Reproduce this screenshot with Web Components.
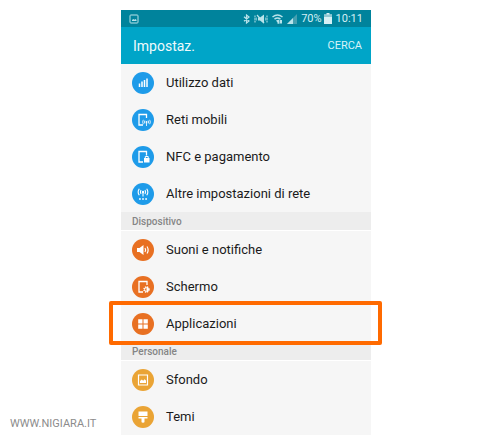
<!DOCTYPE html>
<html lang="it">
<head>
<meta charset="utf-8">
<meta name="viewport" content="width=device-width, initial-scale=1">
<title>Impostazioni</title>
<style>
    body { margin: 0; background: #fff; font-family: Roboto, "Liberation Sans", sans-serif; }
</style>
</head>
<body>
<settings-page></settings-page>

<script>
    // white line icons, drawn on a 22x22 disc
    const ICONS = {
        data: '<path d="M7.500 15v-3.500M10 15V9.500M12.500 15V8M15 15V6.500" stroke-width="1.500"/>',
        mobile: '<path d="M14.500 9V5.500H7v10.500h4" stroke-width="1.300"/><circle cx="14.500" cy="13" r="1" fill="#fff" stroke="none"/><path d="M14.500 13.500V17M12.800 11.500q-1 1.500 0 3M16.200 11.500q1 1.500 0 3M11.300 10.800q-1.300 2.200 0 4.400M17.700 10.800q1.300 2.200 0 4.400" stroke-width=".8"/>',
        nfc: '<path d="M14.500 9.500v-4H7v10.500h4" stroke-width="1.300"/><path d="M12 12h5.500v4.500H12z" fill="#fff" stroke="none"/><path d="M13.300 12v-1.500h2.900V12" stroke-width="1"/>',
        network: '<circle cx="11" cy="9" r="1.200" fill="#fff" stroke="none"/><path d="M11 9.500v4M9 7q-1.200 2 0 4M13 7q1.200 2 0 4M7.300 5.700q-2.300 3.300 0 6.600M14.700 5.700q2.300 3.300 0 6.600" stroke-width="1.100"/><path d="M7 16h1.800M10.100 16h1.800M13.200 16h1.800" stroke-width="1.600"/>',
        sound: '<path d="M5 9h2.500L11.500 6v10L7.500 13H5z" fill="#fff" stroke="none"/><path d="M13 9q1.300 2 0 4M15 7.500q2.300 3.500 0 7" stroke-width="1.200"/>',
        screen: '<path d="M15 9V5.500H7v10.500h4" stroke-width="1.300"/><circle cx="14.500" cy="13.500" r="2.500" stroke-dasharray="1.300 .7" stroke-width="1.400"/><circle cx="14.500" cy="13.500" r="1.900" stroke-width=".8"/><path d="M14.500 11.500v4a2 2 0 0 0 0-4" fill="#fff" stroke="none"/>',
        apps: '<path d="M6.200 6.200h4.300v4.300H6.200zM11.500 6.200h4.300v4.300h-4.300zM6.200 11.500h4.300v4.300H6.200zM11.500 11.500h4.300v4.300h-4.300z" fill="#fff" stroke="none"/>',
        wallpaper: '<path d="M6.500 6h9v10h-9z" stroke-width="1.200"/><path d="M8 14v-2l1.800-1.500 1.400 1.200 1.300-1.500L14 11.500V14z" fill="#fff" stroke="none"/>',
        themes: '<path d="M6.500 5.500h9V10h-9zM6.500 11h9v1.500h-3V16q0 .8-1.500.8T9.500 16v-3.500h-3z" fill="#fff" stroke="none"/>'
    };

    function attach(host, html){
        const template = document.createElement('template');
        template.innerHTML = html;
        host.attachShadow({mode: 'open'}).appendChild(template.content.cloneNode(true));
    }

    class StatusBar extends HTMLElement{
        constructor(){
            super();
            attach(this, `
            <style>
                :host { display: flex; align-items: center; height: 17px; padding: 0 8px; background: #00839c; color: #d5f0f5; font-size: 11px; line-height: 17px; }
                svg { display: block; flex: none; fill: none; stroke: #b9e3ea; }
                .right { display: flex; align-items: center; gap: 4px; margin-left: auto; }
                .battery { display: flex; align-items: center; gap: 2px; }
            </style>
            <svg width="10" height="10" viewBox="0 0 10 10"><rect x="1" y="1" width="8" height="8" rx=".8"/><path d="M3 7V6l1.300-1 1 .8L6.500 5l1 1v1z" fill="#b9e3ea" stroke="none"/></svg>
            <div class="right">
                <svg width="7" height="10" viewBox="0 0 7 10"><path d="M1 2.800l5 4.200-2.500 2V1L6 3 1 7.200" stroke-width="1.200"/></svg>
                <svg width="14" height="10" viewBox="0 0 14 10"><path d="M4 3.500h2L10 .5v9L6 6.500H4z" fill="#b9e3ea" stroke="none"/><path d="M3 1l7 8" stroke-width="1.200"/><path d="M1 1.500v7M13 1.500v7" stroke-dasharray="2 .5"/><path d="M2.500 3.500v3M11.500 3.500v3" stroke-width=".6"/></svg>
                <svg width="11" height="10" viewBox="0 0 11 10"><path d="M.5 3q5-3.900 10 0M2.500 5.200q3-2.400 6 0" stroke-width="1.500"/><path d="M4 6.500q1.500-1 3 0L5.500 8.500zM5.500 9.800V6.500l1-1 1 1v3.300M8 6v3l1 1 1-1V6" fill="#b9e3ea" stroke="none"/></svg>
                <svg width="10" height="10" viewBox="0 0 10 10"><path d="M0 10L10 0v10z" fill="#459fb0" stroke="none"/><path d="M0 10l6-6v6z" fill="#b9e3ea" stroke="none"/></svg>
                <div class="battery">
                    <span>70%</span>
                    <svg width="8" height="11" viewBox="0 0 8 11"><path d="M2.500 0h3v1.500H8V11H0V1.500h2.500z" fill="#d5f0f5" stroke="none"/><path d="M0 1.500h8V4H0z" fill="#8fc7d2" stroke="none"/></svg>
                </div>
                <span>10:11</span>
            </div>`);
        }
    }
    window.customElements.define('status-bar', StatusBar);

    class ActionBar extends HTMLElement{
        constructor(){
            super();
            attach(this, `
            <style>
                :host { display: flex; align-items: center; justify-content: space-between; height: 37px; padding: 0 9px 0 12px; background: #00a5c8; color: #effafc; }
                h1 { margin: 0; font-size: 14px; line-height: 18px; font-weight: 400; }
                button { margin: 0; padding: 0; border: 0; background: none; color: #d8f3f8; font: inherit; font-size: 11px; line-height: 18px; cursor: pointer; }
            </style>
            <h1><slot></slot></h1>
            <button type="button">CERCA</button>`);
        }
    }
    window.customElements.define('action-bar', ActionBar);

    class SettingsGroup extends HTMLElement{
        constructor(){
            super();
            attach(this, `
            <style>
                :host { display: block; }
                h2 { margin: 0; padding: 1px 11px 0; border-bottom: 1px solid #fff; background: #ededed; color: #858585; font-size: 10px; line-height: 17px; font-weight: 500; }
            </style>
            <h2></h2>
            <slot></slot>`);
            const title = this.shadowRoot.querySelector('h2');
            title.textContent = this.getAttribute('label') || '';
            title.hidden = !this.hasAttribute('label');
        }
    }

    class SettingsItem extends HTMLElement{
        constructor(){
            super();
            attach(this, `
            <style>
                :host { display: block; position: relative; }
                a { display: flex; align-items: center; gap: 12px; height: 37px; padding: 0 11px; color: #1b1b1b; font-size: 13px; line-height: 18px; text-decoration: none; }
                svg { flex: none; width: 22px; height: 22px; border-radius: 50%; background: var(--icon-color, #1e9be9); fill: none; stroke: #fff; stroke-width: 1.200; }
                /* frame around the item, wider than the phone */
                :host([highlight])::after { content: ""; position: absolute; z-index: 1; top: -4px; right: -11px; bottom: -3px; left: -12px; box-sizing: border-box; border: 4px solid #ff6a00; border-radius: 2px; pointer-events: none; }
            </style>
            <a href="#"><svg viewBox="0 0 22 22" aria-hidden="true"></svg><span><slot></slot></span></a>`);
            this.shadowRoot.querySelector('svg').innerHTML = ICONS[this.getAttribute('icon')] || '';
        }
    }
    window.customElements.define('settings-group', SettingsGroup);
    window.customElements.define('settings-item', SettingsItem);

    class SettingsPage extends HTMLElement{
        constructor(){
            super();
            attach(this, `
            <style>
                :host { display: grid; grid-template-columns: 111px minmax(0, 250px); padding: 10px 10px 5px; }
                .phone { background: #f6f6f6; }
                .device { --icon-color: #e87022; }
                .personal { --icon-color: #eaa435; }
                footer { align-self: end; padding-bottom: 3px; color: #8c8c8c; font-size: 11px; line-height: 16px; }
            </style>
            <footer>WWW.NIGIARA.IT</footer>
            <main class="phone">
                <status-bar></status-bar>
                <action-bar>Impostaz.</action-bar>
                <settings-group>
                    <settings-item icon="data">Utilizzo dati</settings-item>
                    <settings-item icon="mobile">Reti mobili</settings-item>
                    <settings-item icon="nfc">NFC e pagamento</settings-item>
                    <settings-item icon="network">Altre impostazioni di rete</settings-item>
                </settings-group>
                <settings-group class="device" label="Dispositivo">
                    <settings-item icon="sound">Suoni e notifiche</settings-item>
                    <settings-item icon="screen">Schermo</settings-item>
                    <settings-item icon="apps" highlight>Applicazioni</settings-item>
                </settings-group>
                <settings-group class="personal" label="Personale">
                    <settings-item icon="wallpaper">Sfondo</settings-item>
                    <settings-item icon="themes">Temi</settings-item>
                </settings-group>
            </main>`);
        }
    }
    window.customElements.define('settings-page', SettingsPage);
</script>
</body>
</html>
